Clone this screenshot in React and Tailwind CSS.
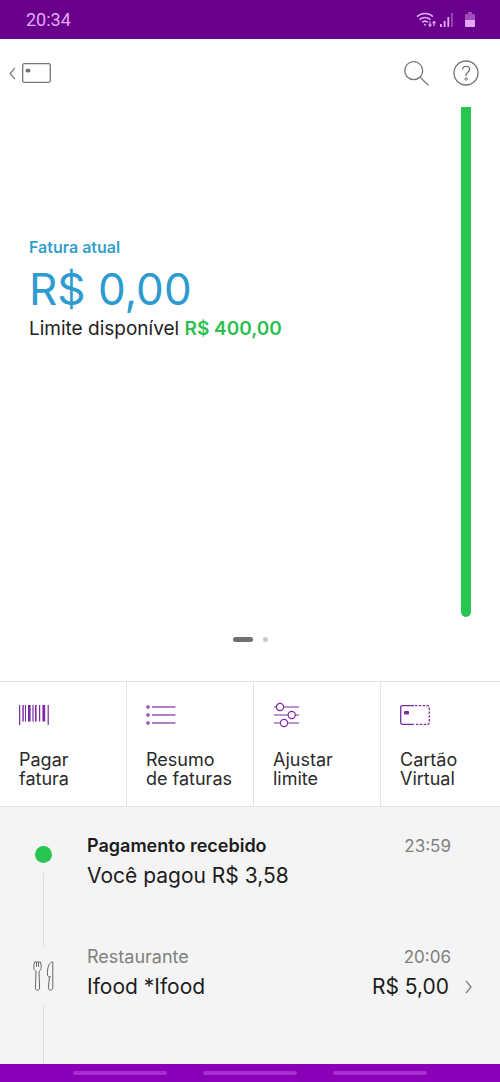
import { Fragment } from 'react';

const shortcuts = [
  { lines: ['Pagar', 'fatura'], Icon: BarcodeIcon },
  { lines: ['Resumo', 'de faturas'], Icon: ListIcon },
  { lines: ['Ajustar', 'limite'], Icon: SlidersIcon },
  { lines: ['Cartão', 'Virtual'], Icon: VirtualCardIcon },
];

function WifiIcon() {
  return (
    <svg width="20" height="16" viewBox="0 0 20 16" fill="none" stroke="currentColor" strokeWidth="1.5">
      <path d="M1 4.6C5.4.3 12.6.3 17 4.6M3.6 7.6c3-2.9 7.8-2.9 10.8 0M6.2 10.4c1.6-1.5 4-1.5 5.6 0" />
      <circle cx="9" cy="12.8" r="1" fill="currentColor" stroke="none" />
      <path d="M14 9.5v4M18 14v-4" strokeWidth="1.2" />
      <path d="M11.9 12.5h4.2L14 15.2zM15.9 11.2h4.2L18 8.5z" fill="currentColor" stroke="none" />
    </svg>
  );
}

function SignalIcon() {
  return (
    <svg width="13" height="14" viewBox="0 0 13 14" fill="currentColor">
      <path d="M0 11h1.8v3H0zM3.7 8h1.8v6H3.7zM7.4 4h1.8v10H7.4z" />
      <path d="M11.1 0h1.7v14h-1.7z" opacity=".45" />
    </svg>
  );
}

function BatteryIcon() {
  return (
    <svg width="10" height="15" viewBox="0 0 10 15" fill="currentColor">
      <path d="M3 0h4v2h2a1 1 0 0 1 1 1v5H0V3a1 1 0 0 1 1-1h2z" opacity=".45" />
      <path d="M0 8h10v6a1 1 0 0 1-1 1H1a1 1 0 0 1-1-1z" />
    </svg>
  );
}

function BarcodeIcon() {
  return (
    <svg width="30" height="20" viewBox="0 0 30 20" fill="currentColor">
      <path d="M0 0h1.2v20H0zM28.6 0h1.2v20h-1.2z" />
      <path d="M3.4 0h1.4v16.5H3.4zM6 0h1v16.5H6zM9 0h2.6v16.5H9zM13.4 0h1.2v16.5h-1.2zM16 0h1.6v16.5H16zM20 0h1.2v16.5H20zM23.4 0h2.8v16.5h-2.8z" />
    </svg>
  );
}

function ListIcon() {
  return (
    <svg width="30" height="20" viewBox="0 0 30 20" fill="none" stroke="currentColor" strokeWidth="1.2">
      {[2, 10, 18].map((y) => (
        <Fragment key={y}>
          <circle cx="2" cy={y} r="1.2" />
          <path d={`M6 ${y}h23.5`} />
        </Fragment>
      ))}
    </svg>
  );
}

function SlidersIcon() {
  return (
    <svg width="26" height="26" viewBox="0 0 26 26" fill="none" stroke="currentColor" strokeWidth="1.2">
      <path d="M1 5h2.4M10.4 5H26M1 13h14.2M22.2 13H26M1 21h6.5M14.500 21H26" />
      <circle cx="7" cy="5" r="3.6" />
      <circle cx="18.7" cy="13" r="3.6" />
      <circle cx="11" cy="21" r="3.6" />
    </svg>
  );
}

function VirtualCardIcon() {
  return (
    <svg width="30" height="20" viewBox="0 0 30 20" fill="none" stroke="currentColor" strokeWidth="1.3">
      <path d="M14 .7H2.4A1.7 1.7 0 0 0 .7 2.4v15.2a1.7 1.7 0 0 0 1.7 1.7H14" />
      <path d="M15 .7h12.6a1.7 1.7 0 0 1 1.7 1.7v15.2a1.7 1.7 0 0 1-1.7 1.7H15" strokeDasharray="2.4 1.4" />
      <rect x="4" y="6" width="5" height="3.6" rx="1" fill="currentColor" stroke="none" />
    </svg>
  );
}

function CutleryIcon() {
  return (
    <svg width="21" height="30" viewBox="0 0 21 30" fill="none" stroke="currentColor" strokeLinejoin="round">
      <path d="M1.6 1C.9 3.600.6 6 .9 7.600c.3 1.400 1.100 2.200 2.100 2.700L2.400 27c0 2.900 4.200 2.900 4.200 0L6 10.300c1-.5 1.800-1.300 2.100-2.700C8.400 6 8.100 3.600 7.400 1H1.600z" />
      <path d="M3.500 1.200v4.600M5.500 1.200v4.600" />
      <path d="M19.800.9c-3.100.3-5 4.100-5.300 9.100-.1 2.300-.1 4.200.3 4.900.4.700 1 .9 1.700.9l-1.100 11c-.2 3 4.400 3 4.400 0z" />
      <path d="M16.500 15.800h1.300" />
    </svg>
  );
}

function StatusBar() {
  return (
    <div className="flex h-[39px] items-center justify-between bg-[#68008c] pr-[25px] pl-[26px] text-[#e3a9f7]">
      <span className="pt-px font-['Roboto',sans-serif] text-lg">20:34</span>
      <div className="flex items-center gap-1">
        <WifiIcon />
        <SignalIcon />
        <span className="ml-2">
          <BatteryIcon />
        </span>
      </div>
    </div>
  );
}

function Header() {
  return (
    <header className="flex h-[68px] items-center justify-between pr-[21px] pl-[9px] text-[#757575]">
      <button type="button" aria-label="Voltar" className="flex items-center gap-[6px]">
        <svg width="7" height="13" viewBox="0 0 7 13" fill="none" stroke="currentColor" strokeWidth="1.2">
          <path d="M6 .8L1.2 6.5 6 12.2" />
        </svg>
        <svg width="29" height="20" viewBox="0 0 29 20" fill="none" stroke="currentColor" strokeWidth="1.3">
          <rect x=".7" y=".7" width="27.6" height="18.6" rx="1.5" />
          <rect x="3.5" y="5.8" width="5" height="3.8" rx="1.8" fill="currentColor" stroke="none" />
        </svg>
      </button>
      <div className="flex items-center gap-6">
        <button type="button" aria-label="Buscar">
          <svg width="25" height="25" viewBox="0 0 25 25" fill="none" stroke="currentColor" strokeWidth="1.3">
            <circle cx="9.7" cy="9.7" r="9" />
            <path d="M16.2 16.2l8.2 8.2" />
          </svg>
        </button>
        <button type="button" aria-label="Ajuda">
          <svg width="26" height="26" viewBox="0 0 26 26" fill="none" stroke="currentColor" strokeWidth="1.3">
            <circle cx="13" cy="13" r="12" />
            <path d="M9.6 9.5C9.700 5.400 16.600 5.500 16.600 9.500c0 2.800-3.500 2.600-3.500 5.500v1" />
            <circle cx="13.1" cy="19" r="1.2" strokeWidth="1" />
          </svg>
        </button>
      </div>
    </header>
  );
}

function Invoice() {
  return (
    <section className="flex flex-1 flex-col">
      <div className="flex flex-1 justify-between px-[29px]">
        <div className="pt-32">
          <h1 className="text-[16px] leading-6 font-semibold text-[#369fce]">Fatura atual</h1>
          <p className="mt-[6px] text-[44px] leading-[48px] text-[#2e9bd0]">R$ 0,00</p>
          <p className="mt-1 text-[19px] leading-6 text-[#222]">
            Limite disponível <strong className="font-semibold text-[#2dbf50]">R$ 400,00</strong>
          </p>
        </div>
        <div className="w-[10px] rounded-b-full bg-[#28c550]" />
      </div>
      <div className="flex h-16 items-center justify-center gap-[10px] pb-[19px]">
        <span className="h-[5px] w-5 rounded-full bg-[#707070]" />
        <span className="size-[5px] rounded-full bg-[#cbcbcb]" />
      </div>
    </section>
  );
}

function Shortcuts() {
  return (
    <nav className="flex overflow-x-auto border-y border-[#e5e5e5] [scrollbar-width:none]">
      {shortcuts.map(({ lines, Icon }) => (
        <button
          key={lines[0]}
          type="button"
          className="min-w-[127px] flex-1 border-r border-[#e5e5e5] pt-[18px] pb-[18px] pl-[19px] text-left last:border-r-0"
        >
          <span className="flex h-[30px] items-center text-[#7d2aa5]">
            <Icon />
          </span>
          <span className="mt-5 block text-[18px] leading-[19px] whitespace-nowrap text-[#2a2a2a]">
            {lines[0]}
            <br />
            {lines[1]}
          </span>
        </button>
      ))}
    </nav>
  );
}

function Timeline() {
  return (
    <ul className="bg-[#f4f4f4] pt-7 text-[#1c1c1c]">
      <li className="flex h-[111px]">
        <div className="flex w-[87px] flex-col items-center">
          <div className="flex h-[38px] items-center">
            <span className="size-[17px] rounded-full bg-[#28c550]" />
          </div>
          <span className="w-px flex-1 bg-[#dcdcdc]" />
        </div>
        <div className="flex-1 pr-[49px]">
          <div className="flex justify-between text-[17px] leading-[22px]">
            <h2 className="text-[18px] font-semibold">Pagamento recebido</h2>
            <time className="text-[#808080]">23:59</time>
          </div>
          <p className="mt-[7px] text-[21px] leading-6">Você pagou R$ 3,58</p>
        </div>
      </li>
      <li className="flex h-[118px]">
        <div className="flex w-[87px] flex-col items-center">
          <div className="flex h-[60px] items-center text-[#666]">
            <CutleryIcon />
          </div>
          <span className="w-px flex-1 bg-[#dcdcdc]" />
        </div>
        <a href="#ifood" className="flex-1 pr-7">
          <div className="flex justify-between pr-[21px] text-[17px] leading-[22px] text-[#808080]">
            <span className="text-[18px]">Restaurante</span>
            <time>20:06</time>
          </div>
          <div className="mt-[7px] flex items-center text-[21px] leading-6">
            <span className="flex-1">Ifood *Ifood</span>
            <span>R$ 5,00</span>
            <svg className="ml-4 text-[#777]" width="7" height="14" viewBox="0 0 7 14" fill="none" stroke="currentColor" strokeWidth="1.2">
              <path d="M1 .8L6 7l-5 6.2" />
            </svg>
          </div>
        </a>
      </li>
    </ul>
  );
}

export default function App() {
  return (
    <div className="flex min-h-screen flex-col bg-white font-['Inter',sans-serif]">
      <StatusBar />
      <Header />
      <Invoice />
      <Shortcuts />
      <Timeline />
      {/* Gesture hints */}
      <div className="flex h-[18px] items-center justify-center gap-9 bg-[#8a00b8]">
        <span className="h-1 w-[94px] rounded-full bg-[#a52fd0]" />
        <span className="h-1 w-[94px] rounded-full bg-[#a52fd0]" />
        <span className="h-1 w-[94px] rounded-full bg-[#a52fd0]" />
      </div>
    </div>
  );
}
